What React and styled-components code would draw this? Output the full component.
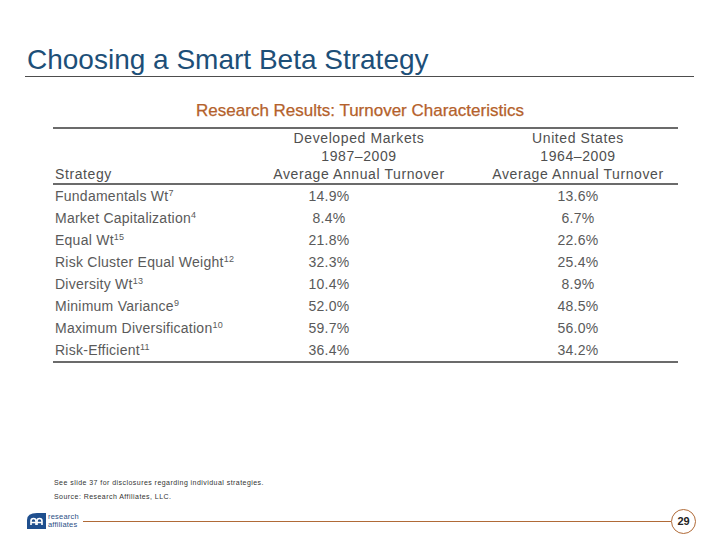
import styled, { createGlobalStyle } from "styled-components";

const GlobalStyle = createGlobalStyle`
  body {
    margin: 0;
    background: #fff;
    font-family: "Liberation Sans", Arial, sans-serif;
  }
`;

const Page = styled.div`
  width: 720px;
  height: 540px;
  display: flex;
  flex-direction: column;
  overflow: hidden;
`;

const TitleBar = styled.div`
  margin: 44px 26px 0 25px;
  border-bottom: 1px solid #4d4d4d;
`;

const Title = styled.h1`
  margin: 0 0 0 2px;
  font-size: 28px;
  line-height: 32px;
  font-weight: 400;
  color: #1d4f78;
`;

const Subtitle = styled.h2`
  margin: 24px 0 6px;
  text-align: center;
  font-size: 17px;
  line-height: 20px;
  font-weight: 400;
  color: #b4612b;
  -webkit-text-stroke: 0.25px #b4612b;
`;

const Table = styled.div`
  margin-left: 53px;
  width: 625px;
  border-top: 2px solid #6b6b6b;
  border-bottom: 2px solid #6b6b6b;
`;

const HeadRow = styled.div`
  display: grid;
  grid-template-columns: 187px 238px 1fr;
  border-bottom: 2px solid #6b6b6b;
  color: #4f4f4f;
  font-size: 14px;
  line-height: 18px;
  letter-spacing: 0.6px;
`;

const HeadCell = styled.div`
  display: flex;
  flex-direction: column;
  justify-content: flex-end;
  text-align: ${(p) => (p.left ? "left" : "center")};
  padding-left: ${(p) => (p.left ? "2px" : "0")};
`;

const Row = styled.div`
  display: grid;
  grid-template-columns: 187px 238px 1fr;
  height: 22px;
  align-items: center;
  color: #5a5a5a;
  font-size: 14px;
  letter-spacing: 0.25px;
`;

const Name = styled.div`
  padding-left: 2px;
  white-space: nowrap;
`;

const Value = styled.div`
  text-align: center;
  padding-right: ${(p) => p.shift || 0}px;
`;

const Sup = styled.sup`
  font-size: 9px;
  vertical-align: 5px;
  line-height: 0;
`;

const Spacer = styled.div`
  flex: 1;
`;

const Notes = styled.div`
  padding-left: 54px;
  font-size: 7px;
  line-height: 14px;
  letter-spacing: 0.45px;
  color: #333;
`;

const Footer = styled.div`
  display: flex;
  align-items: center;
  height: 20px;
  margin: 7px 0 9px 27px;
  padding-right: 24px;
`;

const Logo = styled.div`
  display: flex;
  align-items: center;
  gap: 2px;
`;

const LogoText = styled.div`
  font-size: 7.5px;
  line-height: 8px;
  color: #2a4f86;
  letter-spacing: 0.2px;
`;

const Rule = styled.div`
  flex: 1;
  height: 1px;
  background: #b06a37;
  margin-left: 4px;
`;

const PageNum = styled.div`
  width: 23px;
  height: 23px;
  border: 1px solid #b06a37;
  border-radius: 50%;
  display: flex;
  align-items: center;
  justify-content: center;
  font-size: 11px;
  font-weight: 700;
  color: #222;
`;

const rows = [
  ["Fundamentals Wt", "7", "14.9%", "13.6%"],
  ["Market Capitalization", "4", "8.4%", "6.7%"],
  ["Equal Wt", "15", "21.8%", "22.6%"],
  ["Risk Cluster Equal Weight", "12", "32.3%", "25.4%"],
  ["Diversity Wt", "13", "10.4%", "8.9%"],
  ["Minimum Variance", "9", "52.0%", "48.5%"],
  ["Maximum Diversification", "10", "59.7%", "56.0%"],
  ["Risk-Efficient", "11", "36.4%", "34.2%"],
];

const App = () => {
  return (
    <Page>
      <GlobalStyle />
      <TitleBar>
        <Title>Choosing a Smart Beta Strategy</Title>
      </TitleBar>
      <Subtitle>Research Results: Turnover Characteristics</Subtitle>
      <Table>
        <HeadRow>
          <HeadCell left>Strategy</HeadCell>
          <HeadCell>
            <span>Developed Markets</span>
            <span>1987–2009</span>
            <span>Average Annual Turnover</span>
          </HeadCell>
          <HeadCell>
            <span>United States</span>
            <span>1964–2009</span>
            <span>Average Annual Turnover</span>
          </HeadCell>
        </HeadRow>
        {rows.map(([name, note, dev, us]) => (
          <Row key={name}>
            <Name>
              {name}
              <Sup>{note}</Sup>
            </Name>
            <Value shift={60}>{dev}</Value>
            <Value>{us}</Value>
          </Row>
        ))}
      </Table>
      <Spacer />
      <Notes>
        <div>See slide 37 for disclosures regarding individual strategies.</div>
        <div>Source: Research Affiliates, LLC.</div>
      </Notes>
      <Footer>
        <Logo>
          <svg width="19" height="16" viewBox="0 0 19 16">
            <path d="M0 16 V7 Q0 0 10 0 H19 V16 Z" fill="#1f4f8e" />
            <path d="M4 12 V8 Q4 5.5 6.5 5.5 Q9 5.5 9 8 V12 M4 9.5 H9" stroke="#fff" strokeWidth="1.6" fill="none" />
            <path d="M10 12 V8 Q10 5.5 12.5 5.5 Q15 5.5 15 8 V12 M10 9.5 H15" stroke="#fff" strokeWidth="1.6" fill="none" />
          </svg>
          <LogoText>
            <div>research</div>
            <div>affiliates</div>
          </LogoText>
        </Logo>
        <Rule />
        <PageNum>29</PageNum>
      </Footer>
    </Page>
  );
};

export default App;
